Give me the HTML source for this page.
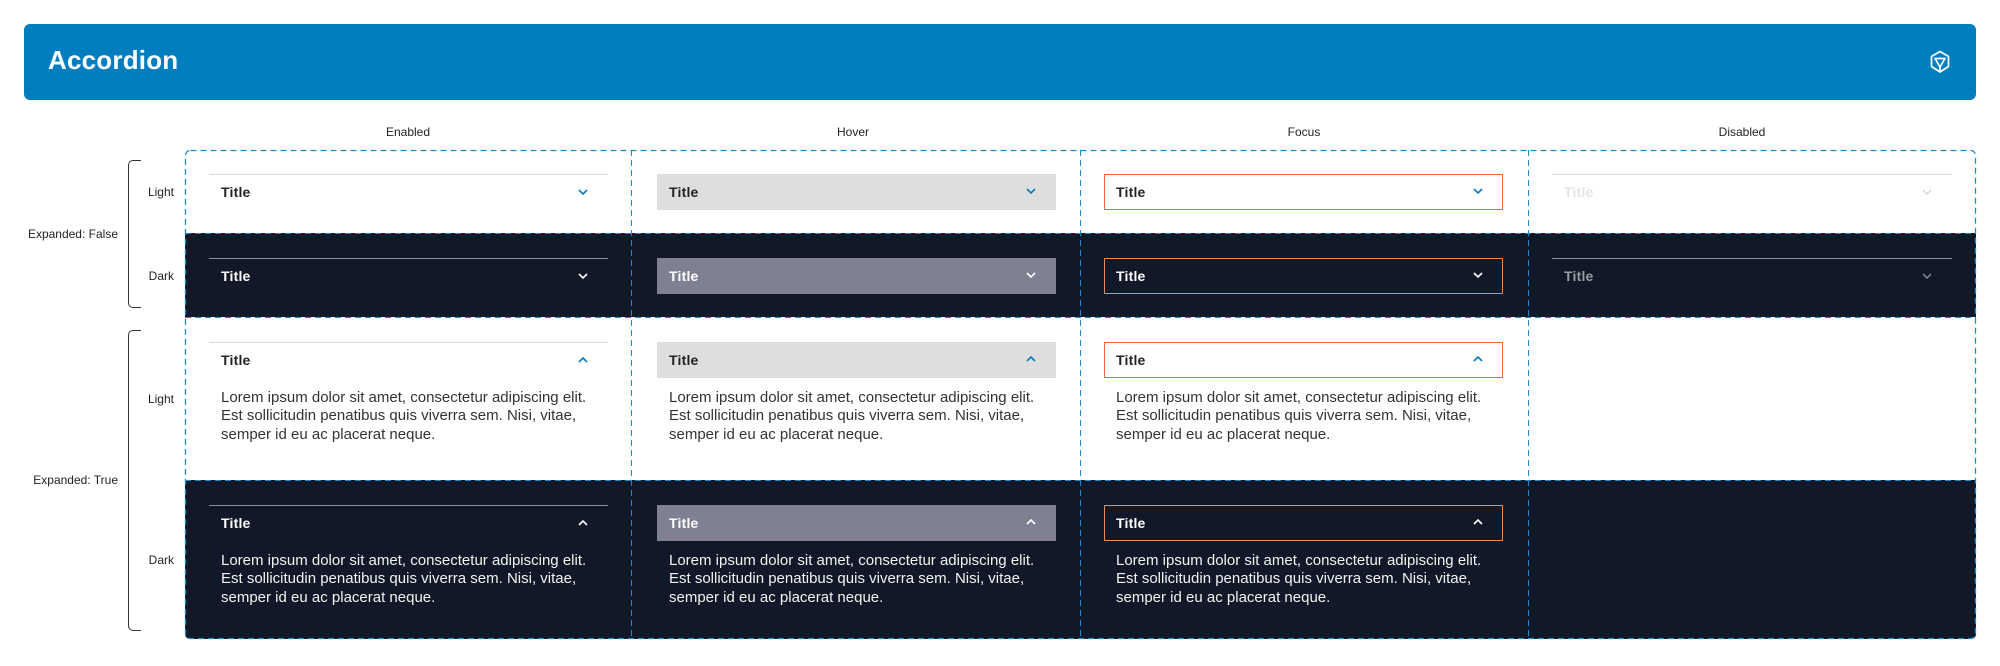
<!DOCTYPE html>
<html><head><meta charset="utf-8"><style>
*{margin:0;padding:0;box-sizing:border-box}
body{width:2000px;height:666px;background:#fff;position:relative;overflow:hidden;font-family:"Liberation Sans",sans-serif}
.abs{position:absolute}
.hdr{left:24px;top:24px;width:1952px;height:76px;background:#027dbd;border-radius:6px}
.hdr h1{position:absolute;left:24px;top:21px;color:#fff;font-size:26px;font-weight:bold;letter-spacing:0.2px}
.col{top:125px;font-size:12px;color:#222;transform:translateX(-50%)}
.lbl{font-size:12px;color:#222;text-align:right}
.br{border:1.5px solid #333;border-right:none;border-radius:5px 0 0 5px;width:13px}
.cell{position:absolute}
.dark{background:#111827}
.acc{position:absolute;left:24px;top:24px;width:399px;height:36px}
.acc .t{position:absolute;left:12px;top:10px;font-size:14px;font-weight:bold;letter-spacing:0.2px}
.acc svg{position:absolute;right:20px;top:14px}
.body{position:absolute;left:36px;top:71px;font-size:15px;line-height:18.3px;width:420px;white-space:nowrap}
.vl{position:absolute;top:150px;height:490px;width:1px;background:repeating-linear-gradient(to bottom,#1b8bd0 0 6px,transparent 6px 10px)}
.hl{position:absolute;height:1px;background:repeating-linear-gradient(to right,#1b8bd0 0 6px,transparent 6px 10px)}
</style></head><body>
<div class="abs hdr"><h1>Accordion</h1>
<svg class="abs" style="left:1905px;top:26px" width="22" height="24" viewBox="0 0 22 24" fill="none" stroke="#fff" stroke-width="1.7" stroke-linejoin="round" stroke-linecap="round"><path d="M11 1.5 L19.5 6.5 L19.5 16.5 L11 22 L2.5 16.5 L2.5 6.5 Z"/><path d="M6 8.5 H16 L11 17 Z"/><path d="M11 17 V22"/></svg>
</div>
<div class="abs col" style="left:408px">Enabled</div>
<div class="abs col" style="left:853px">Hover</div>
<div class="abs col" style="left:1304px">Focus</div>
<div class="abs col" style="left:1742px">Disabled</div>

<div class="abs lbl" style="left:20px;width:98px;top:227px">Expanded: False</div>
<div class="abs lbl" style="left:20px;width:98px;top:473px">Expanded: True</div>
<div class="abs br" style="left:128px;top:160px;height:148px"></div>
<div class="abs br" style="left:128px;top:330px;height:301px"></div>
<div class="abs lbl" style="left:130px;width:44px;top:185px">Light</div>
<div class="abs lbl" style="left:130px;width:44px;top:269px">Dark</div>
<div class="abs lbl" style="left:130px;width:44px;top:392px">Light</div>
<div class="abs lbl" style="left:130px;width:44px;top:553px">Dark</div>

<div class="abs dark" style="left:185px;top:233px;width:1791px;height:84px"></div>
<div class="abs dark" style="left:185px;top:480px;width:1791px;height:159px;border-radius:0 0 5px 5px"></div>

<div class="cell" style="left:185px;top:150px;width:446px"><div class="acc" style="border-top:1px solid #d9d9d9"><span class="t" style="color:#222;top:9px">Title</span><svg width="10" height="6" viewBox="0 0 10 6"><path d="M1 1L5 5L9 1" stroke="#027dbd" stroke-width="1.6" fill="none"/></svg></div></div>
<div class="cell" style="left:631px;top:150px;width:449px"><div class="acc" style="background:#dedede;left:26px"><span class="t" style="color:#222">Title</span><svg width="10" height="6" viewBox="0 0 10 6"><path d="M1 1L5 5L9 1" stroke="#027dbd" stroke-width="1.6" fill="none"/></svg></div></div>
<div class="cell" style="left:1080px;top:150px;width:448px"><div class="acc" style="border:1.5px solid #f0683a"><span class="t" style="color:#222;left:11px;top:8.5px">Title</span><svg style="right:19px;top:12.5px" width="10" height="6" viewBox="0 0 10 6"><path d="M1 1L5 5L9 1" stroke="#027dbd" stroke-width="1.6" fill="none"/></svg></div></div>
<div class="cell" style="left:1528px;top:150px;width:448px"><div class="acc" style="border-top:1px solid #d9d9d9;width:400px"><span class="t" style="color:#e4e4e4;top:9px">Title</span><svg width="10" height="6" viewBox="0 0 10 6"><path d="M1 1L5 5L9 1" stroke="#d4d4d4" stroke-width="1.4" fill="none"/></svg></div></div>

<div class="cell" style="left:185px;top:234px;width:446px"><div class="acc" style="border-top:1px solid #8a8d9a"><span class="t" style="color:#fff;top:9px">Title</span><svg width="10" height="6" viewBox="0 0 10 6"><path d="M1 1L5 5L9 1" stroke="#fff" stroke-width="1.6" fill="none"/></svg></div></div>
<div class="cell" style="left:631px;top:234px;width:449px"><div class="acc" style="background:#7f8091;left:26px"><span class="t" style="color:#fff">Title</span><svg width="10" height="6" viewBox="0 0 10 6"><path d="M1 1L5 5L9 1" stroke="#fff" stroke-width="1.6" fill="none"/></svg></div></div>
<div class="cell" style="left:1080px;top:234px;width:448px"><div class="acc" style="border:1.5px solid #ee8a4e"><span class="t" style="color:#fff;left:11px;top:8.5px">Title</span><svg style="right:19px;top:12.5px" width="10" height="6" viewBox="0 0 10 6"><path d="M1 1L5 5L9 1" stroke="#fff" stroke-width="1.6" fill="none"/></svg></div></div>
<div class="cell" style="left:1528px;top:234px;width:448px"><div class="acc" style="border-top:1px solid #8a8d9a;width:400px"><span class="t" style="color:#9a9ca4;top:9px">Title</span><svg width="10" height="6" viewBox="0 0 10 6"><path d="M1 1L5 5L9 1" stroke="#8a8d96" stroke-width="1.4" fill="none"/></svg></div></div>

<div class="cell" style="left:185px;top:318px;width:446px"><div class="acc" style="border-top:1px solid #d9d9d9"><span class="t" style="color:#222;top:9px">Title</span><svg width="10" height="6" viewBox="0 0 10 6"><path d="M1 5L5 1L9 5" stroke="#027dbd" stroke-width="1.6" fill="none"/></svg></div><div class="body" style="color:#333">Lorem ipsum dolor sit amet, consectetur adipiscing elit.<br>Est sollicitudin penatibus quis viverra sem. Nisi, vitae,<br>semper id eu ac placerat neque.</div></div>
<div class="cell" style="left:631px;top:318px;width:449px"><div class="acc" style="background:#dedede;left:26px"><span class="t" style="color:#222">Title</span><svg width="10" height="6" viewBox="0 0 10 6"><path d="M1 5L5 1L9 5" stroke="#027dbd" stroke-width="1.6" fill="none"/></svg></div><div class="body" style="color:#333;left:38px">Lorem ipsum dolor sit amet, consectetur adipiscing elit.<br>Est sollicitudin penatibus quis viverra sem. Nisi, vitae,<br>semper id eu ac placerat neque.</div></div>
<div class="cell" style="left:1080px;top:318px;width:448px"><div class="acc" style="border:1.5px solid #f0683a"><span class="t" style="color:#222;left:11px;top:8.5px">Title</span><svg style="right:19px;top:12.5px" width="10" height="6" viewBox="0 0 10 6"><path d="M1 5L5 1L9 5" stroke="#027dbd" stroke-width="1.6" fill="none"/></svg></div><div class="body" style="color:#333">Lorem ipsum dolor sit amet, consectetur adipiscing elit.<br>Est sollicitudin penatibus quis viverra sem. Nisi, vitae,<br>semper id eu ac placerat neque.</div></div>

<div class="cell" style="left:185px;top:481px;width:446px"><div class="acc" style="border-top:1px solid #8a8d9a"><span class="t" style="color:#fff;top:9px">Title</span><svg width="10" height="6" viewBox="0 0 10 6"><path d="M1 5L5 1L9 5" stroke="#fff" stroke-width="1.6" fill="none"/></svg></div><div class="body" style="color:#f2f2f2">Lorem ipsum dolor sit amet, consectetur adipiscing elit.<br>Est sollicitudin penatibus quis viverra sem. Nisi, vitae,<br>semper id eu ac placerat neque.</div></div>
<div class="cell" style="left:631px;top:481px;width:449px"><div class="acc" style="background:#7f8091;left:26px"><span class="t" style="color:#fff">Title</span><svg width="10" height="6" viewBox="0 0 10 6"><path d="M1 5L5 1L9 5" stroke="#fff" stroke-width="1.6" fill="none"/></svg></div><div class="body" style="color:#f2f2f2;left:38px">Lorem ipsum dolor sit amet, consectetur adipiscing elit.<br>Est sollicitudin penatibus quis viverra sem. Nisi, vitae,<br>semper id eu ac placerat neque.</div></div>
<div class="cell" style="left:1080px;top:481px;width:448px"><div class="acc" style="border:1.5px solid #ee8a4e"><span class="t" style="color:#fff;left:11px;top:8.5px">Title</span><svg style="right:19px;top:12.5px" width="10" height="6" viewBox="0 0 10 6"><path d="M1 5L5 1L9 5" stroke="#fff" stroke-width="1.6" fill="none"/></svg></div><div class="body" style="color:#f2f2f2">Lorem ipsum dolor sit amet, consectetur adipiscing elit.<br>Est sollicitudin penatibus quis viverra sem. Nisi, vitae,<br>semper id eu ac placerat neque.</div></div>

<svg class="abs" style="left:184px;top:149px" width="1794" height="492"><rect x="1.5" y="1.5" width="1790" height="488" rx="5" fill="none" stroke="#1b8bd0" stroke-width="1.3" stroke-dasharray="6 4"/></svg>
<div class="vl" style="left:631px"></div>
<div class="vl" style="left:1080px"></div>
<div class="vl" style="left:1528px"></div>
<div class="hl" style="left:185px;width:1791px;top:233px"></div>
<div class="hl" style="left:185px;width:1791px;top:317px"></div>
<div class="hl" style="left:185px;width:1791px;top:480px"></div>
</body></html>
